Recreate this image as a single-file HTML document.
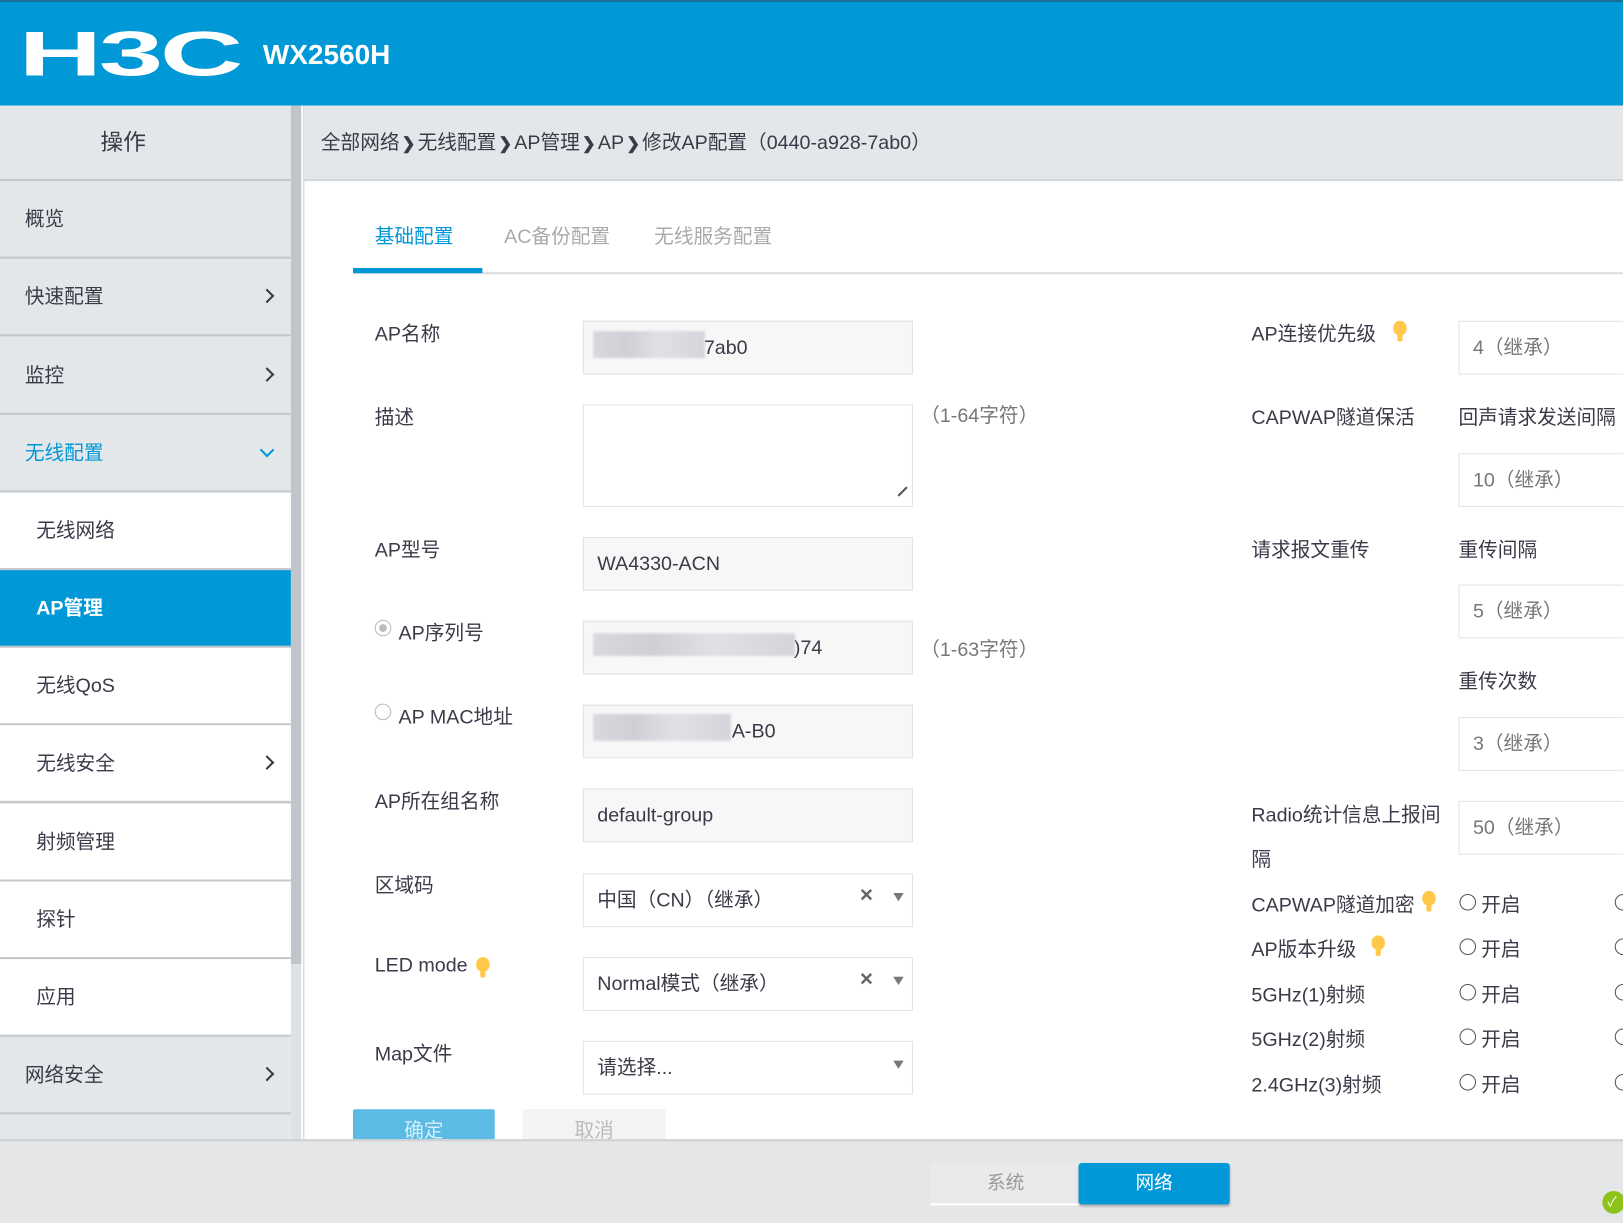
<!DOCTYPE html>
<html><head><meta charset="utf-8"><style>
*{box-sizing:border-box;margin:0;padding:0}
html,body{width:1623px;height:1223px;overflow:hidden;background:#fff}
#s{position:absolute;left:0;top:0;width:1568px;height:1182px;transform:scale(1.0351,1.0347);transform-origin:0 0;font-family:"Liberation Sans","Noto Sans CJK SC",sans-serif;color:#3a3a48;font-size:19px;overflow:hidden}
.a{position:absolute;white-space:nowrap}
.hdr{left:0;top:0;width:1568px;height:102px;background:#0098d6;border-top:2px solid #1a6f9a}
.side{left:0;top:102px;width:281px;height:1000px;background:#e4e7e9}
.mi{position:absolute;left:0;width:281px;height:75px;border-bottom:2px solid #c4c7ca;line-height:75px;padding-left:24px}
.w{background:#fff;padding-left:35px}
.chev{position:absolute;right:18px;top:31px;width:10px;height:10px;border-right:2.5px solid #3a3a48;border-top:2.5px solid #3a3a48;transform:rotate(45deg)}
.inp{position:absolute;left:563px;width:319px;height:52px;background:#f7f7f7;border:1px solid #e2e2e2;line-height:52px;padding-left:13px}
.wh{background:#fff}
.lbl{position:absolute;left:362px}
.rl{position:absolute;left:1209px}
.ri{position:absolute;left:1409px;width:200px;height:52px;border:1px solid #e2e2e2;background:#fff;line-height:52px;padding-left:13px;color:#777}
.bulb{position:absolute;width:13px;height:14px;border-radius:50% 50% 45% 45%;background:#ffc84a}
.bulb:after{content:"";position:absolute;left:4px;top:13px;width:5px;height:7px;background:#ffc84a;border-radius:0 0 2px 2px}
.x{position:absolute;left:830px;color:#666;font-size:17px;font-weight:bold}
.tri{position:absolute;left:863px;width:0;height:0;border-left:5px solid transparent;border-right:5px solid transparent;border-top:8px solid #777}
.rad{position:absolute;width:16px;height:16px;border:1.5px solid #555;border-radius:50%}
.blur{position:absolute;height:26px;background:linear-gradient(90deg,#d8d9de,#cfd0d6 30%,#e0e1e5 60%,#d4d5da);filter:blur(1px)}
.b{font-weight:bold;font-size:16px;padding:0 2px}
</style></head><body><div id="s">
<div class="a hdr"></div>
<div class="a" style="left:18px;top:22px;color:#fff;font-size:72px;font-weight:bold;letter-spacing:-2px;line-height:72px;transform:scale(1.55,0.85);transform-origin:0 0;font-family:'Liberation Sans',sans-serif">H3C</div>
<div class="a" style="left:254px;top:37px;color:#fff;font-size:27px;font-weight:bold;line-height:32px">WX2560H</div>

<div class="a side"></div>
<div class="a" style="left:281px;top:102px;width:10px;height:830px;background:#c0c5cb"></div>
<div class="a" style="left:281px;top:932px;width:10px;height:170px;background:#dfe2e5"></div>
<div class="a" style="left:293px;top:102px;width:1px;height:1000px;background:#c8cbce"></div>
<div class="a" style="left:0;top:102px;width:238px;height:73px;border-bottom:2px solid #c4c7ca;text-align:center;line-height:72px;font-size:22px"></div>
<div class="a" style="left:0;top:102px;width:281px;height:73px;border-bottom:2px solid #c4c7ca"></div>
<div class="a" style="left:0;top:102px;width:238px;text-align:center;line-height:72px;font-size:22px">操作</div>
<div class="mi" style="top:175px">概览</div>
<div class="mi" style="top:250px">快速配置<span class="chev"></span></div>
<div class="mi" style="top:326px">监控<span class="chev"></span></div>
<div class="mi" style="top:401px;color:#0096d6">无线配置<span class="chev" style="transform:rotate(135deg);border-color:#0096d6;top:29px"></span></div>
<div class="mi w" style="top:476px">无线网络</div>
<div class="mi" style="top:551px;background:#0098d6;color:#fff;padding-left:35px;font-weight:bold">AP管理</div>
<div class="mi w" style="top:626px">无线QoS</div>
<div class="mi w" style="top:701px">无线安全<span class="chev"></span></div>
<div class="mi w" style="top:777px">射频管理</div>
<div class="mi w" style="top:852px">探针</div>
<div class="mi w" style="top:927px">应用</div>
<div class="mi" style="top:1002px">网络安全<span class="chev"></span></div>

<div class="a" style="left:294px;top:102px;width:1274px;height:73px;background:#e4e7e9;border-bottom:2px solid #d4d6d8;line-height:74px;padding-left:16px">全部网络<span class="b">❯</span>无线配置<span class="b">❯</span>AP管理<span class="b">❯</span>AP<span class="b">❯</span>修改AP配置（0440-a928-7ab0）</div>

<div class="a" style="left:362px;top:214px;color:#0096d6">基础配置</div>
<div class="a" style="left:487px;top:214px;color:#aaa">AC备份配置</div>
<div class="a" style="left:632px;top:214px;color:#aaa">无线服务配置</div>
<div class="a" style="left:341px;top:263px;width:1227px;height:2px;background:#ddd"></div>
<div class="a" style="left:341px;top:259px;width:125px;height:5px;background:#0098d6"></div>

<div class="lbl" style="top:308px">AP名称</div>
<div class="inp" style="top:310px"><span style="padding-left:103px">7ab0</span></div>
<div class="blur" style="left:573px;top:320px;width:108px"></div>
<div class="lbl" style="top:389px">描述</div>
<div class="inp wh" style="top:391px;height:99px"></div>
<div class="a" style="left:866px;top:474px;width:12px;height:2px;background:#555;transform:rotate(-45deg)"></div>
<div class="a" style="left:889px;top:387px;color:#777">（1-64字符）</div>
<div class="lbl" style="top:517px">AP型号</div>
<div class="inp" style="top:519px">WA4330-ACN</div>
<div class="rad" style="left:362px;top:599px;border-color:#bbb;background:radial-gradient(#bbb 35%,#fff 40%)"></div>
<div class="lbl" style="left:385px;top:597px">AP序列号</div>
<div class="inp" style="top:600px"><span style="padding-left:190px">)74</span></div>
<div class="blur" style="left:573px;top:612px;width:195px;height:22px"></div>
<div class="a" style="left:889px;top:613px;color:#777">（1-63字符）</div>
<div class="rad" style="left:362px;top:680px;border-color:#bbb"></div>
<div class="lbl" style="left:385px;top:678px">AP MAC地址</div>
<div class="inp" style="top:681px"><span style="padding-left:130px">A-B0</span></div>
<div class="blur" style="left:573px;top:690px;width:133px"></div>
<div class="lbl" style="top:760px">AP所在组名称</div>
<div class="inp" style="top:762px">default-group</div>
<div class="lbl" style="top:841px">区域码</div>
<div class="inp wh" style="top:844px">中国（CN）（继承）</div>
<div class="x" style="top:856px">✕</div><div class="tri" style="top:863px"></div>
<div class="lbl" style="top:923px">LED mode</div>
<div class="bulb" style="left:460px;top:925px"></div>
<div class="inp wh" style="top:925px">Normal模式（继承）</div>
<div class="x" style="top:937px">✕</div><div class="tri" style="top:944px"></div>
<div class="lbl" style="top:1004px">Map文件</div>
<div class="inp wh" style="top:1006px">请选择...</div>
<div class="tri" style="top:1025px"></div>
<div class="a" style="left:341px;top:1072px;width:137px;height:40px;background:#5bbbe5;color:#d6eef9;text-align:center;line-height:44px;border-radius:2px">确定</div>
<div class="a" style="left:505px;top:1072px;width:138px;height:40px;background:#f3f3f3;color:#bbb;text-align:center;line-height:44px;border-radius:2px">取消</div>

<div class="rl" style="top:308px">AP连接优先级</div><div class="bulb" style="left:1346px;top:310px"></div>
<div class="ri" style="top:310px">4（继承）</div>
<div class="rl" style="top:389px">CAPWAP隧道保活</div>
<div class="a" style="left:1409px;top:389px">回声请求发送间隔</div>
<div class="ri" style="top:438px">10（继承）</div>
<div class="rl" style="top:517px">请求报文重传</div>
<div class="a" style="left:1409px;top:517px">重传间隔</div>
<div class="ri" style="top:565px">5（继承）</div>
<div class="a" style="left:1409px;top:644px">重传次数</div>
<div class="ri" style="top:693px">3（继承）</div>
<div class="rl" style="top:767px;line-height:43px;white-space:normal;width:195px">Radio统计信息上报间隔</div>
<div class="ri" style="top:774px">50（继承）</div>
<div class="rl" style="top:860px">CAPWAP隧道加密</div><div class="bulb" style="left:1374px;top:861px"></div>
<div class="rl" style="top:903px">AP版本升级</div><div class="bulb" style="left:1325px;top:904px"></div>
<div class="rl" style="top:947px">5GHz(1)射频</div>
<div class="rl" style="top:990px">5GHz(2)射频</div>
<div class="rl" style="top:1034px">2.4GHz(3)射频</div>
<div class="rad" style="left:1410px;top:864px"></div><div class="a" style="left:1431px;top:860px">开启</div><div class="rad" style="left:1560px;top:864px"></div>
<div class="rad" style="left:1410px;top:907px"></div><div class="a" style="left:1431px;top:903px">开启</div><div class="rad" style="left:1560px;top:907px"></div>
<div class="rad" style="left:1410px;top:951px"></div><div class="a" style="left:1431px;top:947px">开启</div><div class="rad" style="left:1560px;top:951px"></div>
<div class="rad" style="left:1410px;top:994px"></div><div class="a" style="left:1431px;top:990px">开启</div><div class="rad" style="left:1560px;top:994px"></div>
<div class="rad" style="left:1410px;top:1038px"></div><div class="a" style="left:1431px;top:1034px">开启</div><div class="rad" style="left:1560px;top:1038px"></div>

<div class="a" style="left:0;top:1101px;width:1568px;height:81px;background:#e4e6e8;border-top:2px solid #cfd1d3"></div>
<div class="a" style="left:899px;top:1124px;width:145px;height:41px;background:#e8eaec;border-bottom:2px solid #fff;color:#999;text-align:center;line-height:39px;font-size:18px">系统</div>
<div class="a" style="left:1042px;top:1124px;width:146px;height:40px;background:#0098d6;color:#fff;text-align:center;line-height:39px;font-size:18px;border-radius:3px;box-shadow:0 2px 2px #aaa">网络</div>
<div class="a" style="left:1548px;top:1151px;width:22px;height:22px;border-radius:50%;background:#8cc21a;color:#fff;font-size:13px;line-height:22px;padding-left:5px">✓</div>
</div></body></html>
